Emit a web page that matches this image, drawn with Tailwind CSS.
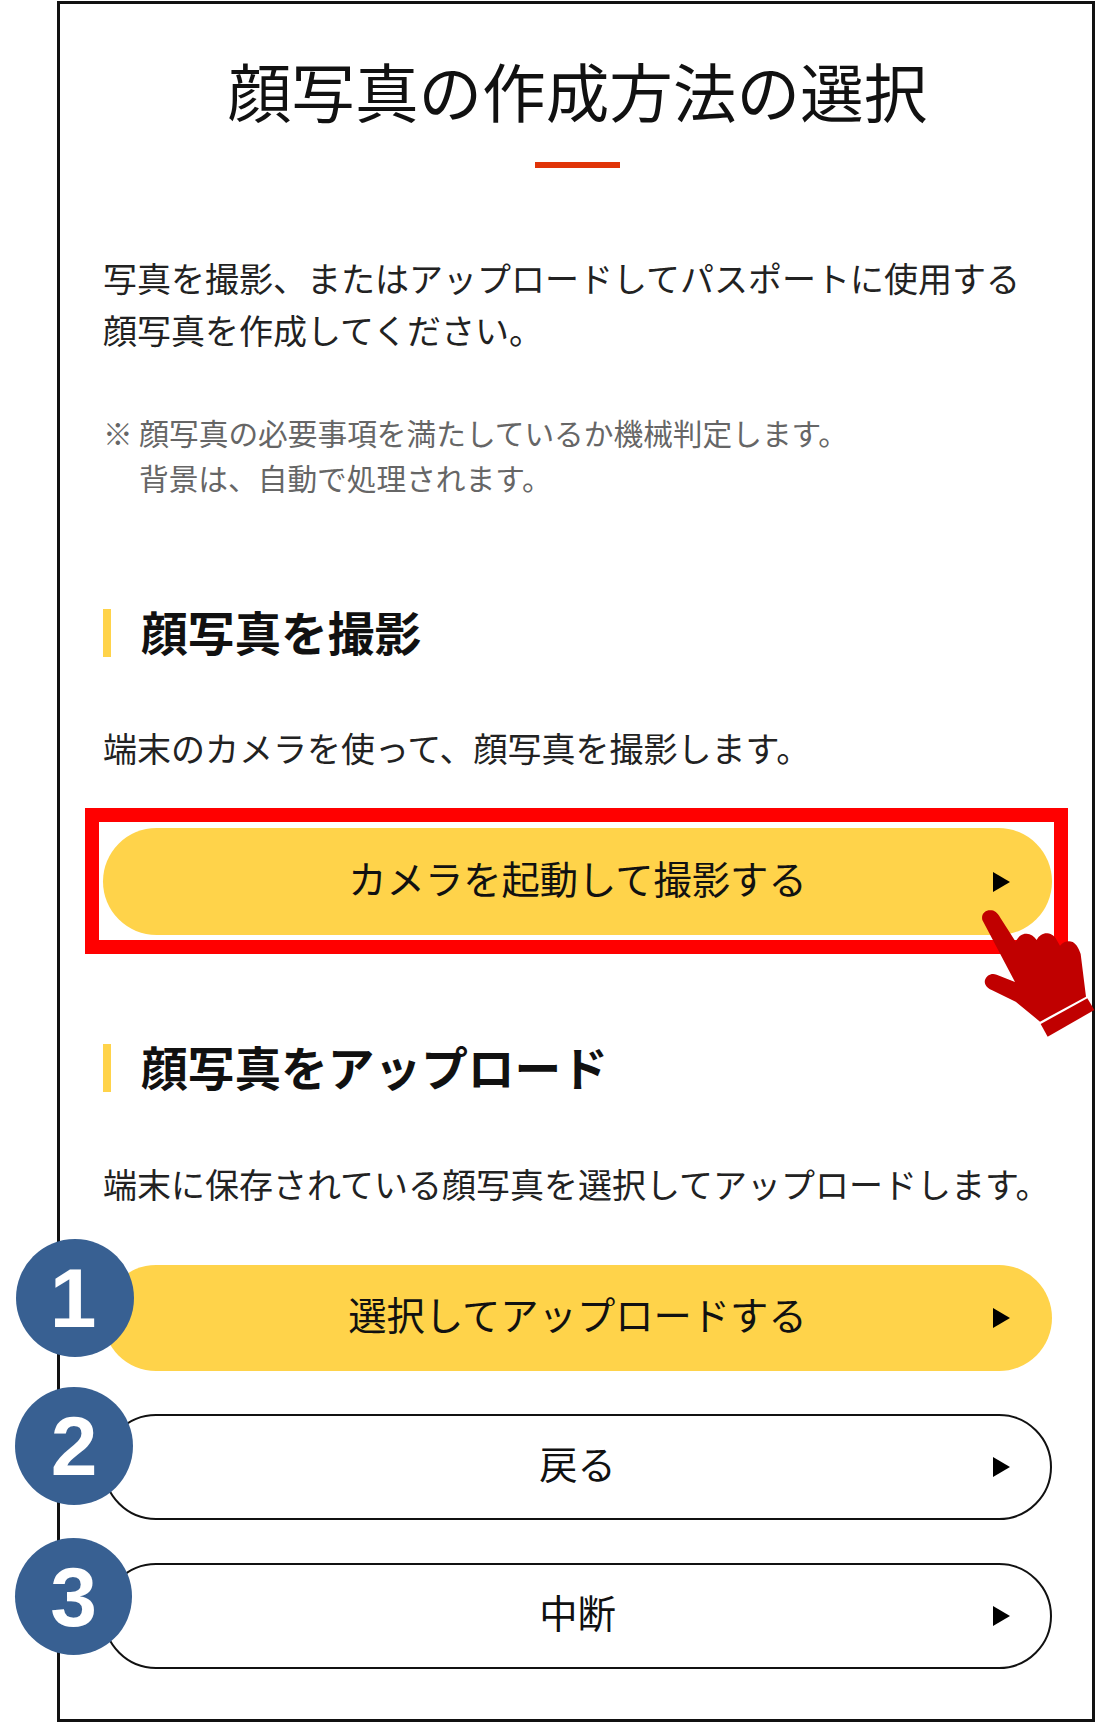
<!DOCTYPE html>
<html lang="ja">
<head>
  <meta charset="UTF-8">
  <title>顔写真の作成方法の選択</title>
  <script src="https://cdn.jsdelivr.net/npm/@tailwindcss/browser@4"></script>
</head>
<body class="bg-white font-['Noto_Sans_CJK_JP','Noto_Sans',sans-serif] text-[#222]">
  <div class="relative w-[1109px] h-[1723px] overflow-hidden">

    <!-- Frame -->
    <main class="absolute left-[57px] top-[1px] w-[1038px] h-[1721px] border-[3px] border-[#111] pl-[43px] pr-[40px]">
      <h1 class="mt-[49px] text-center text-[63.6px] leading-[72px] text-[#111]">顔写真の作成方法の選択</h1>
      <div class="mx-auto mt-[37px] w-[85px] h-[6px] bg-[#e03408]"></div>

      <p class="mt-[84px] text-[34px] leading-[52px]">写真を撮影、またはアップロードしてパスポートに使用する<br>顔写真を作成してください。</p>
      <p class="mt-[54px] text-[29.7px] leading-[45px] text-[#666] pl-[36px] -indent-[36px]">※ 顔写真の必要事項を満たしているか機械判定します。<br>背景は、自動で処理されます。</p>

      <!-- Camera -->
      <h2 class="mt-[109px] h-[48px] border-l-[8px] border-[#ffd34a] pl-[30px] text-[46.7px] leading-[44px] font-bold text-[#111]">顔写真を撮影</h2>
      <p class="mt-[65px] text-[34px] leading-[52px]">端末のカメラを使って、顔写真を撮影します。</p>
      <a class="mt-[54px] flex relative items-center justify-center h-[107px] pb-[8px] rounded-full bg-[#ffd34a] text-[38.3px] text-[#111]">
        カメラを起動して撮影する
        <span class="absolute right-[42px] top-[44px] w-0 h-0 border-y-[10px] border-y-transparent border-l-[17px] border-l-black"></span>
      </a>

      <!-- Upload -->
      <h2 class="mt-[109px] h-[48px] border-l-[8px] border-[#ffd34a] pl-[30px] text-[46.7px] leading-[44px] font-bold text-[#111]">顔写真をアップロード</h2>
      <p class="mt-[66px] text-[34px] leading-[52px] whitespace-nowrap">端末に保存されている顔写真を選択してアップロードします。</p>
      <div class="mt-[55px] flex flex-col gap-[43px]">
        <a class="flex relative items-center justify-center h-[106px] pb-[8px] rounded-full bg-[#ffd34a] text-[38.3px] text-[#111]">
          選択してアップロードする
          <span class="absolute right-[42px] top-[43px] w-0 h-0 border-y-[10px] border-y-transparent border-l-[17px] border-l-black"></span>
        </a>
        <a class="flex relative items-center justify-center h-[106px] pb-[8px] rounded-full border-2 border-[#111] text-[38.3px] text-[#111]">
          戻る
          <span class="absolute right-[40px] top-[41px] w-0 h-0 border-y-[10px] border-y-transparent border-l-[17px] border-l-black"></span>
        </a>
        <a class="flex relative items-center justify-center h-[106px] pb-[8px] rounded-full border-2 border-[#111] text-[38.3px] text-[#111]">
          中断
          <span class="absolute right-[40px] top-[41px] w-0 h-0 border-y-[10px] border-y-transparent border-l-[17px] border-l-black"></span>
        </a>
      </div>
    </main>

    <!-- Annotations over the screen -->
    <div class="absolute left-[85px] top-[808px] w-[983px] h-[146px] border-[14px] border-[#ff0000]"></div>

    <svg class="absolute left-[850px] top-[780px]" width="259" height="280" viewBox="0 0 777 840">
      <path fill="#c00000" d="M397 420 C392 398 410 388 425 391 C438 393 445 403 450 412 L497 485 C505 468 518 460 530 461 C542 462 552 468 560 480 C567 466 580 459 592 460 C606 461 615 470 620 480 L630 497 C640 485 655 481 668 486 C680 492 688 510 692 522 L708 650 L570 725 L497 665 L425 630 C408 622 402 610 405 600 C410 585 425 578 440 584 L495 606 Z"/>
      <path fill="#c00000" d="M572 732 L712 655 L733 690 L593 770 Z"/>
    </svg>

    <div class="absolute left-[16px] top-[1239px] w-[118px] h-[118px] pr-[4px] rounded-full bg-[#386092] flex items-center justify-center text-white font-bold text-[84px] font-['Liberation_Sans',sans-serif]">1</div>
    <div class="absolute left-[15px] top-[1387px] w-[118px] h-[118px] rounded-full bg-[#386092] flex items-center justify-center text-white font-bold text-[84px] font-['Liberation_Sans',sans-serif]">2</div>
    <div class="absolute left-[15px] top-[1538px] w-[117px] h-[117px] rounded-full bg-[#386092] flex items-center justify-center text-white font-bold text-[84px] font-['Liberation_Sans',sans-serif]">3</div>
  </div>
</body>
</html>
